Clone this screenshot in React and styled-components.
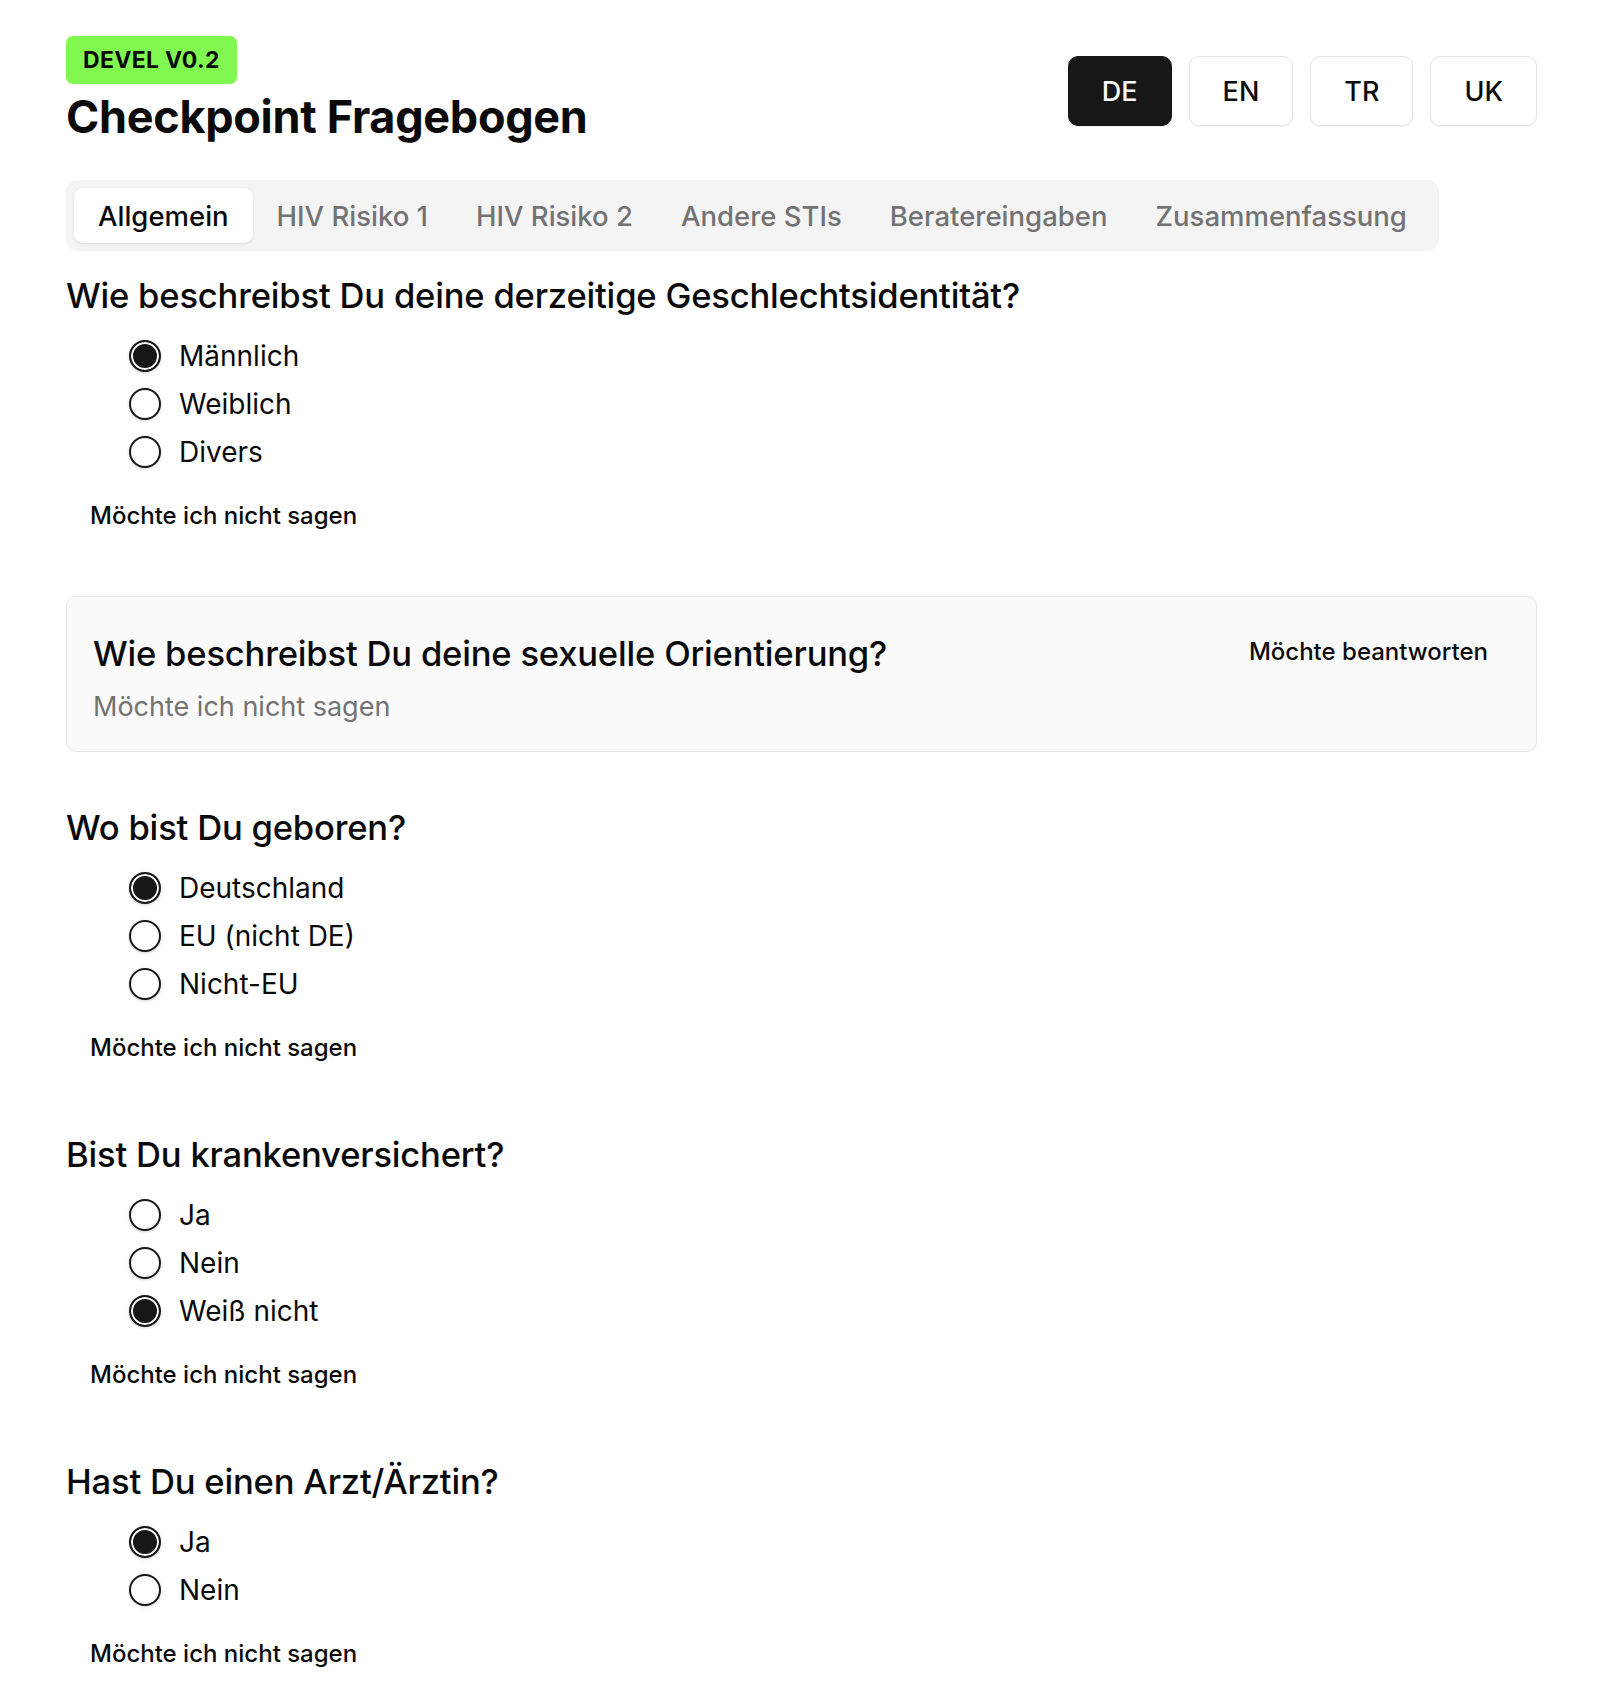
import React, { useState } from 'react';
import styled, { createGlobalStyle } from 'styled-components';

const GlobalStyle = createGlobalStyle`
  body {
    margin: 0;
    background: #ffffff;
    color: #0a0a0a;
    font-family: 'Inter', 'Noto Sans', sans-serif;
  }
`;

// Seite
const Page = styled.div`
  width: 1471px;
  padding: 36px 0 48px 66px;
`;

const Header = styled.header`
  display: flex;
  justify-content: space-between;
  align-items: center;
`;

const TitleBlock = styled.div`
  display: flex;
  flex-direction: column;
  align-items: flex-start;
`;

const Badge = styled.span`
  display: inline-flex;
  align-items: center;
  height: 48px;
  padding: 0 17px;
  background: #80f84f;
  border-radius: 7px;
  font-size: 23px;
  font-weight: 700;
  letter-spacing: 0.3px;
  color: #0a0a0a;
`;

const Title = styled.h1`
  margin: 6px 0 0;
  font-size: 45px;
  line-height: 54px;
  font-weight: 700;
  letter-spacing: -0.3px;
`;

const LangGroup = styled.div`
  display: flex;
  gap: 17px;
  margin-top: 2px;
`;

const LangButton = styled.button`
  height: 70px;
  padding: 0 33px;
  border-radius: 10px;
  border: 1.5px solid ${(p) => (p.$active ? '#171717' : '#e5e5e5')};
  background: ${(p) => (p.$active ? '#171717' : '#ffffff')};
  color: ${(p) => (p.$active ? '#fafafa' : '#0a0a0a')};
  box-shadow: 0 1px 2px rgba(0, 0, 0, 0.06);
  font-family: inherit;
  font-size: 27px;
  font-weight: 500;
  cursor: pointer;
`;

// Tabs
const TabList = styled.div`
  display: inline-flex;
  margin-top: 36px;
  padding: 8px;
  background: #f4f4f5;
  border-radius: 12px;
`;

const Tab = styled.button`
  height: 55px;
  padding: 0 24px;
  border: none;
  border-radius: 9px;
  background: ${(p) => (p.$active ? '#ffffff' : 'transparent')};
  box-shadow: ${(p) => (p.$active ? '0 1px 3px rgba(0,0,0,0.1)' : 'none')};
  color: ${(p) => (p.$active ? '#0a0a0a' : '#737373')};
  font-family: inherit;
  font-size: 27.5px;
  font-weight: 500;
  cursor: pointer;
`;

// Fragen
const Form = styled.div`
  display: flex;
  flex-direction: column;
  margin-top: 23px;
`;

const Question = styled.section`
  display: flex;
  flex-direction: column;
  align-items: flex-start;
  margin-top: ${(p) => p.$mt}px;
`;

const QuestionTitle = styled.h2`
  margin: 0;
  font-size: 34.6px;
  line-height: 42px;
  font-weight: 500;
  letter-spacing: -0.2px;
`;

const Options = styled.div`
  display: flex;
  flex-direction: column;
  margin-top: 16px;
  padding-left: 63px;
`;

const OptionRow = styled.label`
  display: flex;
  align-items: center;
  gap: 18px;
  height: 48px;
  font-size: 28px;
  cursor: pointer;
`;

const Radio = styled.input`
  appearance: none;
  -webkit-appearance: none;
  margin: 0;
  width: 32px;
  height: 32px;
  border-radius: 50%;
  border: 2px solid #171717;
  background: #ffffff;
  box-shadow: 0 1px 3px rgba(0, 0, 0, 0.18);
  cursor: pointer;

  &:checked {
    background: #171717;
    box-shadow: inset 0 0 0 2px #ffffff, 0 1px 3px rgba(0, 0, 0, 0.18);
  }
`;

const GhostButton = styled.button`
  margin-top: ${(p) => p.$mt || '0'};
  padding: 8px 24px;
  border: none;
  border-radius: 8px;
  background: transparent;
  color: #0a0a0a;
  font-family: inherit;
  font-size: 24px;
  line-height: 24px;
  font-weight: 500;
  cursor: pointer;
  white-space: nowrap;
`;

const SkippedCard = styled.section`
  display: flex;
  justify-content: space-between;
  align-items: flex-start;
  margin-top: ${(p) => p.$mt}px;
  padding: 35px 24px 27px 26px;
  background: #fafafa;
  border: 1.5px solid #e5e5e5;
  border-radius: 10px;
`;

const SkippedText = styled.p`
  margin: 16px 0 0;
  font-size: 27px;
  line-height: 34px;
  color: #737373;
`;

const tabs = ['Allgemein', 'HIV Risiko 1', 'HIV Risiko 2', 'Andere STIs', 'Beratereingaben', 'Zusammenfassung'];

const questions = [
  {
    id: 'gender',
    title: 'Wie beschreibst Du deine derzeitige Geschlechtsidentität?',
    options: ['Männlich', 'Weiblich', 'Divers'],
    value: 'Männlich',
  },
  {
    id: 'orientation',
    title: 'Wie beschreibst Du deine sexuelle Orientierung?',
    skipped: true,
  },
  {
    id: 'birth',
    title: 'Wo bist Du geboren?',
    options: ['Deutschland', 'EU (nicht DE)', 'Nicht-EU'],
    value: 'Deutschland',
  },
  {
    id: 'insurance',
    title: 'Bist Du krankenversichert?',
    options: ['Ja', 'Nein', 'Weiß nicht'],
    value: 'Weiß nicht',
  },
  {
    id: 'doctor',
    title: 'Hast Du einen Arzt/Ärztin?',
    options: ['Ja', 'Nein'],
    value: 'Ja',
  },
];

// Abstand je nach vorheriger Frage (Karte oder normale Frage)
const spacing = (q, prev) => {
  if (!prev) return 0;
  if (q.skipped) return 60;
  if (prev.skipped) return 54;
  return 65;
};

const App = () => {
  const [lang, setLang] = useState('DE');
  const [tab, setTab] = useState('Allgemein');
  const [answers, setAnswers] = useState(
    Object.fromEntries(questions.map((q) => [q.id, q.value]))
  );

  return (
    <Page>
      <GlobalStyle />
      <Header>
        <TitleBlock>
          <Badge>DEVEL V0.2</Badge>
          <Title>Checkpoint Fragebogen</Title>
        </TitleBlock>
        <LangGroup>
          {['DE', 'EN', 'TR', 'UK'].map((l) => (
            <LangButton key={l} $active={lang === l} onClick={() => setLang(l)}>
              {l}
            </LangButton>
          ))}
        </LangGroup>
      </Header>

      <TabList>
        {tabs.map((t) => (
          <Tab key={t} $active={tab === t} onClick={() => setTab(t)}>
            {t}
          </Tab>
        ))}
      </TabList>

      <Form>
        {questions.map((q, i) =>
          q.skipped ? (
            <SkippedCard key={q.id} $mt={spacing(q, questions[i - 1])}>
              <div>
                <QuestionTitle>{q.title}</QuestionTitle>
                <SkippedText>Möchte ich nicht sagen</SkippedText>
              </div>
              <GhostButton>Möchte beantworten</GhostButton>
            </SkippedCard>
          ) : (
            <Question key={q.id} $mt={spacing(q, questions[i - 1])}>
              <QuestionTitle>{q.title}</QuestionTitle>
              <Options>
                {q.options.map((o) => (
                  <OptionRow key={o}>
                    <Radio
                      type="radio"
                      name={q.id}
                      checked={answers[q.id] === o}
                      onChange={() => setAnswers({ ...answers, [q.id]: o })}
                    />
                    {o}
                  </OptionRow>
                ))}
              </Options>
              <GhostButton $mt="20px">Möchte ich nicht sagen</GhostButton>
            </Question>
          )
        )}
      </Form>
    </Page>
  );
};

export default App;
